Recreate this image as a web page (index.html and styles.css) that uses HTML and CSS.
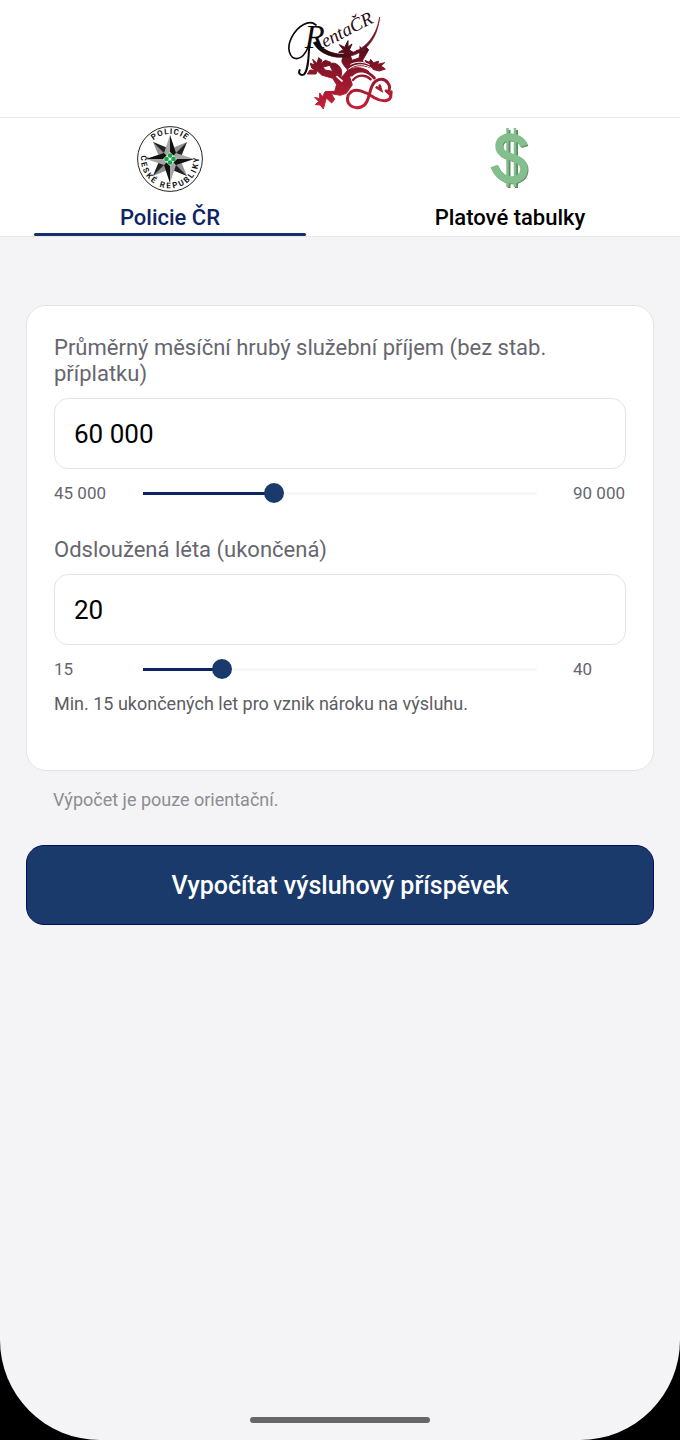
FILE: index.html
```html
<!DOCTYPE html>
<html lang="cs">
<head>
  <meta charset="UTF-8" />
  <meta name="viewport" content="width=device-width, initial-scale=1" />
  <title>RentaČR</title>
  <link rel="stylesheet" href="styles.css">
</head>
<body>
  <div class="screen">
    <header class="header">
      <svg class="logo" viewBox="0 0 360 351" role="img" aria-label="RentaČR">
        <defs>
          <linearGradient id="lion" gradientUnits="userSpaceOnUse" x1="0" y1="120" x2="0" y2="320">
            <stop offset="0" stop-color="#3a0b14" />
            <stop offset="0.45" stop-color="#8a1528" />
            <stop offset="1" stop-color="#c41f36" />
          </linearGradient>
          <linearGradient id="swash" x1="0" y1="0" x2="1" y2="0">
            <stop offset="0" stop-color="#0c0708" />
            <stop offset="0.6" stop-color="#5e0e1c" />
            <stop offset="1" stop-color="#7a1626" />
          </linearGradient>
        </defs>
        <!-- lev -->
        <g fill="url(#lion)" stroke="url(#lion)" stroke-width="3" stroke-linejoin="round">
          <path d="M186 180 L194 158 L176 157 L190 149 L178 134 L194 142 L204 122 L204 141 L216 132 L208 150 L218 156 L208 159 L216 181 L237 174 L240 161 L229 151 L242 154 L240 140 L251 153 L256 140 L266 149 L260 160 L246 184 L262 192 L255 181 L268 187 L272 178 L280 188 L296 184 L293 193 L314 188 L303 198 L316 207 L298 213 L282 209 C260 194 224 192 203 210 C194 198 184 190 186 180 Z" />
          <path d="M82 222 L90 210 L106 211 L95 204 L91 190 L104 195 L98 178 L111 190 L116 173 L126 181 L121 191 L136 181 L152 187 L150 196 L129 201 L135 210 L158 214 L148 193 C162 183 179 195 185 212 L183 234 L203 211 C227 197 252 203 267 215 C242 204 219 212 209 231 L217 254 L199 280 L181 286 L154 281 L164 298 L155 309 L139 294 L136 305 L130 327 L121 315 L106 314 L116 304 L104 292 L119 296 L119 279 L128 290 L135 275 L164 274 L170 254 L158 235 L125 225 L111 212 L108 222 Z" />
        </g>
        <g fill="none" stroke="url(#lion)" stroke-width="9" stroke-linecap="round">
          <path d="M215 225 C233 204 264 212 283 234" />
          <path d="M219 240 C235 221 259 225 272 238" stroke-width="7" />
          <path d="M205 285 C195 310 217 330 243 321 C277 309 260 251 296 239 C319 233 337 258 324 276" />
          <path d="M209 280 C225 260 262 278 283 293 C305 306 329 305 332 290" />
          <path d="M290 262 L303 270 L299 257 M318 272 L333 286 L334 275" stroke-width="8" />
        </g>
        <g fill="none" stroke="#fff" stroke-width="3" stroke-linecap="round">
          <path d="M206 207 C226 190 256 190 276 206" />
          <path d="M212 193 C232 183 254 186 268 194" />
          <path d="M171 230 L186 243" stroke-width="5" />
        </g>
        <!-- nápis -->
        <path d="M100 128 C135 196 285 196 299 51 C277 182 145 184 112 124 Z" fill="url(#swash)" stroke="url(#swash)" stroke-width="2" />
        <text class="logo-initial" x="74" y="143">R</text>
        <text class="logo-text" x="134" y="143" transform="rotate(-27 134 143)">entaČR</text>
        <g fill="none" stroke="#10080a" stroke-linecap="round">
          <path d="M108 75 C88 58 54 75 35 112 C18 145 29 176 51 176 C68 175 78 158 86 138" stroke-width="5" />
          <path d="M88 138 C85 170 86 212 71 224 C61 228 54 219 59 210" stroke-width="6" />
        </g>
      </svg>
    </header>

    <nav class="tabs">
      <a class="tab active" href="#policie" aria-current="page">
        <svg class="tab-icon" viewBox="0 0 66 66" aria-hidden="true">
          <defs>
            <path id="arc-top" d="M8 33 A25 25 0 0 1 58 33" />
            <path id="arc-bottom" d="M9 17 A29 29 0 1 0 57 17" />
          </defs>
          <circle cx="33" cy="33" r="32.4" fill="#fff" stroke="#222" stroke-width="1" />
          <text class="badge-text"><textPath href="#arc-top" startOffset="50%" text-anchor="middle">POLICIE</textPath></text>
          <text class="badge-text badge-text-wide"><textPath href="#arc-bottom" startOffset="50%" text-anchor="middle">ČESKÉ REPUBLIKY</textPath></text>
          <path d="M16 16 L33 23 L50 16 L43 33 L50 50 L33 43 L16 50 L23 33 Z" fill="#929292" />
          <path d="M16 16 L33 23 L33 33 Z M50 16 L43 33 L33 33 Z M50 50 L33 43 L33 33 Z M16 50 L23 33 L33 33 Z" fill="#222" />
          <path d="M33 9 L39 27 L57 33 L39 39 L33 57 L27 39 L9 33 L27 27 Z" fill="#a6a6a6" />
          <path d="M33 9 L39 27 L33 33 Z M57 33 L39 39 L33 33 Z M33 57 L27 39 L33 33 Z M9 33 L27 27 L33 33 Z" fill="#111" />
          <path d="M33 26 L40 33 L33 40 L26 33 Z" fill="#d9f3e2" />
          <g fill="#19a64a">
            <circle cx="33" cy="29.5" r="2.3" />
            <circle cx="36.5" cy="33" r="2.3" />
            <circle cx="33" cy="36.5" r="2.3" />
            <circle cx="29.5" cy="33" r="2.3" />
          </g>
          <circle cx="33" cy="33" r="1.2" fill="#fff" />
        </svg>
        <span>Policie ČR</span>
      </a>
      <a class="tab" href="#tabulky">
        <svg class="tab-icon" viewBox="0 0 66 66" aria-hidden="true">
          <g fill="none" stroke="#5c8c64" transform="translate(1 1)">
            <path d="M31 3 V61 M38.5 3 V61" stroke-width="3" />
            <path d="M47 20 C43 8 22 8 22 20 C22 34 47 28 47 43 C47 57 24 59 17 40" stroke-width="7" />
          </g>
          <g fill="none" stroke="#83bf8c">
            <path d="M30.5 2 V61 M38 2 V61" stroke-width="2.5" />
            <path d="M47 20 C43 8 22 8 22 20 C22 34 47 28 47 43 C47 57 24 59 17 40" stroke-width="7.5" />
          </g>
        </svg>
        <span>Platové tabulky</span>
      </a>
    </nav>

    <main class="content">
      <form id="calculator">
        <div class="card">
          <div class="field">
            <label for="income">Průměrný měsíční hrubý služební příjem (bez stab. příplatku)</label>
            <input type="text" id="income" inputmode="numeric" value="60 000" />
            <div class="slider-row">
              <span>45 000</span>
              <input type="range" class="slider" id="incomeRange" aria-label="Průměrný příjem" min="45000" max="90000" step="500" value="60000" style="--fill: 0.3333" />
              <span>90 000</span>
            </div>
          </div>

          <div class="field">
            <label for="years">Odsloužená léta (ukončená)</label>
            <input type="text" id="years" inputmode="numeric" value="20" />
            <div class="slider-row">
              <span>15</span>
              <input type="range" class="slider" id="yearsRange" aria-label="Odsloužená léta" min="15" max="40" value="20" style="--fill: 0.2" />
              <span>40</span>
            </div>
            <p class="hint">Min. 15 ukončených let pro vznik nároku na výsluhu.</p>
          </div>
        </div>

        <p class="disclaimer">Výpočet je pouze orientační.</p>
        <button type="button" class="submit">Vypočítat výsluhový příspěvek</button>
      </form>
    </main>

    <div class="home-indicator"></div>
  </div>

  <script>
    function formatNumber(value) {
      return String(value).replace(/\B(?=(\d{3})+$)/g, ' ');
    }

    function bindSlider(inputId, rangeId) {
      const input = document.getElementById(inputId);
      const range = document.getElementById(rangeId);

      function updateFill() {
        range.style.setProperty('--fill', (range.value - range.min) / (range.max - range.min));
      }

      range.addEventListener('input', () => {
        input.value = formatNumber(range.value);
        updateFill();
      });

      input.addEventListener('change', () => {
        range.value = input.value.replace(/\D/g, '');
        input.value = formatNumber(range.value);
        updateFill();
      });
    }

    bindSlider('income', 'incomeRange');
    bindSlider('years', 'yearsRange');
  </script>
</body>
</html>
```
FILE: styles.css
```css
*, *::before, *::after {
  box-sizing: border-box;
}

body {
  margin: 0;
  font-family: Roboto, 'Liberation Sans', sans-serif;
  background: #000;
  color: #000;
}

.screen {
  min-height: 100vh;
  display: flex;
  flex-direction: column;
  background: #f4f4f7;
  border-radius: 0 0 100px 100px;
  overflow: hidden;
}

/* Hlavička */
.header {
  display: flex;
  justify-content: center;
  background: #fff;
  border-bottom: 1px solid #ebebed;
}

.logo {
  width: 120px;
  height: 117px;
}

.logo-initial {
  font: italic 98px 'Liberation Serif', serif;
  fill: #10080a;
}

.logo-text {
  font: italic 56px 'Liberation Serif', serif;
  fill: #2a0b12;
}

/* Záložky */
.tabs {
  display: flex;
  background: #fff;
  border-bottom: 1px solid #e8e8ea;
}

.tab {
  flex: 1;
  display: flex;
  flex-direction: column;
  align-items: center;
  padding-top: 8px;
  color: #000;
  font-size: 22px;
  font-weight: 500;
  line-height: 26px;
  text-decoration: none;
}

.tab::after {
  content: '';
  width: 80%;
  height: 3px;
  margin-top: 2px;
  border-radius: 2px;
}

.tab.active {
  color: #0d2464;
}

.tab.active::after {
  background: #12306a;
}

.tab-icon {
  width: 66px;
  height: 66px;
  margin-bottom: 13px;
}

.badge-text {
  font: bold 8px Roboto, sans-serif;
  letter-spacing: 1px;
  fill: #111;
}

.badge-text-wide {
  letter-spacing: 2px;
}

/* Formulář */
.content {
  padding: 68px 26px 32px;
}

.card {
  padding: 29px 27px 54px;
  background: #fff;
  border: 1px solid #e4e4e6;
  border-radius: 20px;
}

.field + .field {
  margin-top: 34px;
}

.field label {
  display: block;
  color: #66666e;
  font-size: 22px;
  line-height: 26px;
}

.field input[type="text"] {
  display: block;
  width: 100%;
  height: 71px;
  margin: 11px 0 14px;
  padding: 0 19px;
  border: 1px solid #e4e4e6;
  border-radius: 14px;
  background: #fff;
  color: #000;
  font-family: inherit;
  font-size: 26px;
}

.slider-row {
  display: flex;
  align-items: center;
  color: #66666e;
  font-size: 17px;
  line-height: 20px;
}

.slider-row span:first-child {
  width: 79px;
}

.slider-row span:last-child {
  width: 53px;
  margin-left: 26px;
}

/* Dráha začíná a končí ve středu jezdce */
.slider {
  flex: 1;
  min-width: 0;
  height: 20px;
  margin: 0;
  appearance: none;
  background:
    linear-gradient(#0d2464, #0d2464) 10px center / calc((100% - 20px) * var(--fill)) 3px no-repeat,
    linear-gradient(#f7f7f8, #f7f7f8) center / calc(100% - 20px) 3px no-repeat;
}

.slider::-webkit-slider-thumb {
  appearance: none;
  width: 20px;
  height: 20px;
  border-radius: 50%;
  background: #1a3a6b;
}

.hint,
.disclaimer {
  margin: 0;
  font-size: 18px;
  line-height: 24px;
}

.hint {
  margin-top: 13px;
  color: #5c5c63;
}

.disclaimer {
  margin: 17px 27px 33px;
  color: #8c8c92;
}

.submit {
  display: block;
  width: 100%;
  height: 80px;
  border: 1px solid #060f5c;
  border-radius: 18px;
  background: #1a3a6b;
  color: #fff;
  font-family: inherit;
  font-size: 25px;
  font-weight: 500;
  cursor: pointer;
}

.home-indicator {
  width: 180px;
  height: 6px;
  margin: auto auto 17px;
  border-radius: 3px;
  background: #666;
}
```
